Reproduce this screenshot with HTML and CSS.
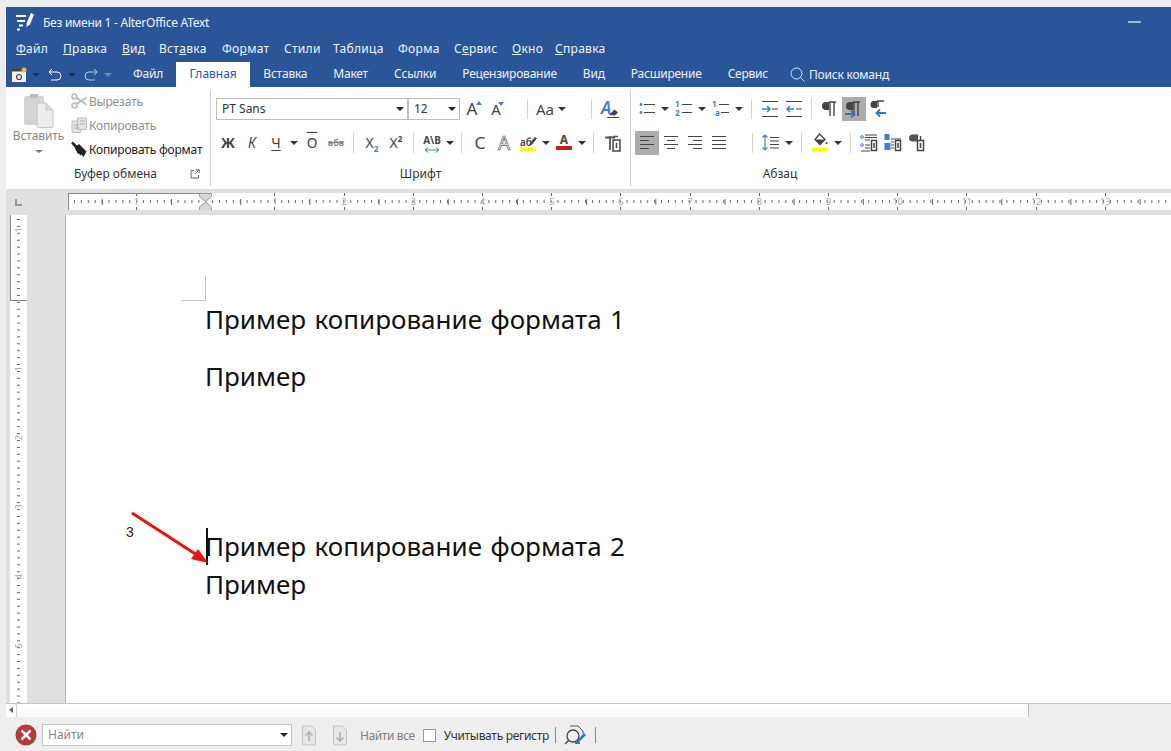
FILE: index.html
```html
<!doctype html>
<html lang="ru">

<head>
    <meta charset="UTF-8">
    <title>Без имени 1 - AlterOffice AText</title>
    <link rel="stylesheet" href="styles.css">
</head>

<body>
    <svg class="defs" width="0" height="0">
        <symbol id="i-caret" viewBox="0 0 12 24"><path d="M2 10h8l-4 4z" fill="#333"/></symbol>
        <symbol id="i-bullets" viewBox="0 0 24 24"><g fill="#3f7fd6"><circle cx="6" cy="7.500" r="1.400"/><circle cx="6" cy="15.500" r="1.400"/></g><path d="M9 7.500h11M9 15.500h11" stroke="#444" stroke-width="1.200"/></symbol>
        <symbol id="i-ind-in" viewBox="0 0 24 24"><path d="M4 4.500h16M14 12h6M4 19.500h16" stroke="#444" stroke-width="1.200"/><path d="M4 12h7M9 9l3 3-3 3" fill="none" stroke="#3f7fd6" stroke-width="1.500"/></symbol>
        <symbol id="i-ind-out" viewBox="0 0 24 24"><path d="M4 4.500h16M14 12h6M4 19.500h16" stroke="#444" stroke-width="1.200"/><path d="M12 12H5M8 9l-3 3 3 3" fill="none" stroke="#3f7fd6" stroke-width="1.500"/></symbol>
        <symbol id="i-pil" viewBox="0 0 24 24"><path d="M11 5H8a3.500 3.500 0 0 0 0 8h3z" fill="#444"/><path d="M11 5h7M12 5v14M16 5v14" stroke="#444" stroke-width="1.400"/></symbol>
        <symbol id="i-pil-r" viewBox="0 0 24 24"><path d="M11 5H8a3.500 3.500 0 0 0 0 8h3z" fill="#444"/><path d="M11 5h7M12 5v14M16 5v14" stroke="#444" stroke-width="1.400"/><path d="M3 17h9M9 13.500l3.500 3.500L9 20.500" fill="none" stroke="#2f72d0" stroke-width="1.800"/></symbol>
        <symbol id="i-pil-l" viewBox="0 0 24 24"><path d="M11 4H8a3.500 3.500 0 0 0 0 7h3z" fill="#444"/><path d="M11 4h7M12 4v6" stroke="#444" stroke-width="1.400"/><path d="M20 16h-9M14 12.500L10.500 16l3.500 3.500" fill="none" stroke="#2f72d0" stroke-width="1.800"/></symbol>
        <symbol id="i-left" viewBox="0 0 24 24"><path d="M5 5.500h14M5 9.500h9M5 13.500h14M5 17.500h9" stroke="#444" stroke-width="1.200"/></symbol>
        <symbol id="i-center" viewBox="0 0 24 24"><path d="M5 5.500h14M8 9.500h8M5 13.500h14M8 17.500h8" stroke="#444" stroke-width="1.200"/></symbol>
        <symbol id="i-right" viewBox="0 0 24 24"><path d="M5 5.500h14M10 9.500h9M5 13.500h14M10 17.500h9" stroke="#444" stroke-width="1.200"/></symbol>
        <symbol id="i-just" viewBox="0 0 24 24"><path d="M5 5.500h14M5 9.500h14M5 13.500h14M5 17.500h14" stroke="#444" stroke-width="1.200"/></symbol>
        <symbol id="i-spacing" viewBox="0 0 24 24"><path d="M11 6.500h9M11 10h9M11 13.500h9M11 17h9" stroke="#444" stroke-width="1.200"/><path d="M6 4v15M3.500 6.500L6 4l2.500 2.500M3.500 16.500L6 19l2.500-2.500" fill="none" stroke="#3f7fd6" stroke-width="1.200"/></symbol>
        <symbol id="i-fill" viewBox="0 0 24 24"><path d="M11.500 3l5.500 5.500-5 5-5-5z" fill="none" stroke="#444" stroke-width="1.300"/><path d="M7 8.500h10l-5 5z" fill="#444"/><circle cx="18.500" cy="12" r="1" fill="#444"/><path d="M4 16.500h16v4H4z" fill="#ffff00"/></symbol>
        <symbol id="i-before" viewBox="0 0 24 24"><circle cx="5" cy="6" r="1.300" fill="none" stroke="#3f7fd6"/><circle cx="5" cy="14" r="1.300" fill="none" stroke="#3f7fd6"/><path d="M8 4h12M8 6.500h12M8 9h5M8 14h5M8 17h5M4 20h9" stroke="#444"/><rect x="14.500" y="9.500" width="5" height="10" fill="#fff" stroke="#444" stroke-width="1.500"/><path d="M17 12v5" stroke="#444" stroke-width="1.500"/></symbol>
        <symbol id="i-after" viewBox="0 0 24 24"><path d="M3.500 3h5v6h-5zM3.500 12h6v7h-6z" fill="#3f7fd6"/><path d="M10 8h10M10 11h3M10 14h3M10 17h3" stroke="#444"/><rect x="14.500" y="9.500" width="5" height="10" fill="#fff" stroke="#444" stroke-width="1.500"/><path d="M17 12v5" stroke="#444" stroke-width="1.500"/></symbol>
        <symbol id="i-para" viewBox="0 0 24 24"><path d="M13 3.500H7.500a3.500 3.500 0 0 0 0 7H13z" fill="#555"/><rect x="12.500" y="9.500" width="6" height="10" fill="#fff" stroke="#444" stroke-width="1.500"/><path d="M15.500 12v5M15.500 5v4" stroke="#444" stroke-width="1.500"/></symbol>
        <symbol id="i-box" viewBox="0 0 24 24"><path d="M5 6.500h10M10 5v14" stroke="#555" stroke-width="1.800"/><path d="M13 5.500h5" stroke="#555" stroke-width="1.500"/><rect x="13" y="9" width="7" height="11" fill="#fff" stroke="#444" stroke-width="1.500"/><path d="M16.500 12v5" stroke="#444" stroke-width="1.500"/></symbol>
        <symbol id="i-updoc" viewBox="0 0 18 24"><path d="M2.500 3h9l4 4v13.500a1.500 1.500 0 0 1-1.500 1.500H4a1.500 1.500 0 0 1-1.500-1.500z" fill="#e6e6e6" stroke="#c2c2c2"/><path d="M9 18V9M5.500 12.500L9 9l3.500 3.500" fill="none" stroke="#adadad" stroke-width="1.500"/></symbol>
        <symbol id="i-downdoc" viewBox="0 0 18 24"><path d="M2.500 3h9l4 4v13.500a1.500 1.500 0 0 1-1.500 1.500H4a1.500 1.500 0 0 1-1.500-1.500z" fill="#e6e6e6" stroke="#c2c2c2"/><path d="M9 9v9M5.500 14.500L9 18l3.500-3.500" fill="none" stroke="#adadad" stroke-width="1.500"/></symbol>
    </svg>

    <header class="titlebar">
        <div class="title-row">
            <svg class="logo" width="18" height="18" viewBox="0 0 18 18">
                <path d="M0 3h10M1 8h8M3 12.500h4M1 16.500h3" stroke="#fff" stroke-width="2" fill="none"/>
                <path d="M15 0l3 1.500-4 10-3.500 2.500.2-4z" fill="#fff"/>
            </svg>
            <span class="doc-title">Без имени 1 - AlterOffice AText</span>
            <span class="minimize"></span>
        </div>
        <nav class="menu-row">
            <span class="m1"><u>Ф</u>айл</span>
            <span class="m2"><u>П</u>равка</span>
            <span class="m3"><u>В</u>ид</span>
            <span class="m4">Вст<u>а</u>вка</span>
            <span class="m5">Фо<u>р</u>мат</span>
            <span class="m6">Стили</span>
            <span class="m7">Таблица</span>
            <span class="m8">Форма</span>
            <span class="m9">С<u>е</u>рвис</span>
            <span class="m10"><u>О</u>кно</span>
            <span class="m11"><u>С</u>правка</span>
        </nav>
        <div class="tab-row">
            <div class="quick">
                <svg width="16" height="16" viewBox="0 0 16 16">
                    <path d="M1 3h12l2 2v10H1z" fill="#f4f4f4"/>
                    <path d="M1 1.500h11v3H1z" fill="#444"/>
                    <circle cx="8" cy="10" r="2.500" fill="none" stroke="#444" stroke-width="1.200"/>
                    <circle cx="13" cy="3" r="2.500" fill="#f2b33d"/>
                </svg>
                <svg class="q-caret" width="12" height="24"><path d="M2 10h8l-4 4z" fill="#20324f"/></svg>
                <svg width="16" height="14" viewBox="0 0 16 14">
                    <path d="M5 1L2 4l3 3M2 4h8a3.500 3.500 0 0 1 0 8H4" fill="none" stroke="#fff"/>
                </svg>
                <svg class="q-caret" width="12" height="24"><path d="M2 10h8l-4 4z" fill="#20324f"/></svg>
                <svg width="16" height="14" viewBox="0 0 16 14">
                    <path d="M11 1l3 3-3 3M14 4H6a3.500 3.500 0 0 0 0 8h6" fill="none" stroke="#b9c8df"/>
                </svg>
                <svg class="q-caret" width="12" height="24"><path d="M2 10h8l-4 4z" fill="#7187ab"/></svg>
            </div>
            <span class="tab">Файл</span>
            <span class="tab active">Главная</span>
            <span class="tab">Вставка</span>
            <span class="tab">Макет</span>
            <span class="tab">Ссылки</span>
            <span class="tab">Рецензирование</span>
            <span class="tab">Вид</span>
            <span class="tab">Расширение</span>
            <span class="tab">Сервис</span>
            <span class="tell">
                <svg width="15" height="15" viewBox="0 0 15 15"><circle cx="6.500" cy="6.500" r="5.500" fill="none" stroke="#dfe6f1"/><path d="M10.500 10.500l4 4" stroke="#dfe6f1"/></svg>
                Поиск команд
            </span>
        </div>
    </header>

    <section class="ribbon">
        <div class="group clip">
            <div class="clip-body">
                <div class="paste">
                    <svg width="32" height="34" viewBox="0 0 32 34">
                        <rect x="1" y="2" width="20" height="29" rx="2" fill="#d4d4d4"/>
                        <rect x="7" y="0" width="8" height="4" fill="#bdbdbd"/>
                        <path d="M14 9h9l7 7v16a1.500 1.500 0 0 1-1.500 1.500h-13A1.500 1.500 0 0 1 14 32z" fill="#ececec" stroke="#c4c4c4"/>
                        <path d="M23 9v7h7" fill="#dadada" stroke="#c4c4c4"/>
                    </svg>
                    <span class="paste-label">Вставить</span>
                    <svg width="12" height="12" viewBox="0 2 12 12"><path d="M2 7h8l-4 3z" fill="#777"/></svg>
                </div>
                <div class="clip-list">
                    <div class="clip-item off">
                        <svg width="16" height="16" viewBox="0 0 16 16">
                            <circle cx="3.500" cy="3.500" r="2.500" fill="none" stroke="#bbb" stroke-width="1.500"/>
                            <circle cx="3.500" cy="12.500" r="2.500" fill="none" stroke="#bbb" stroke-width="1.500"/>
                            <path d="M5.500 5l10 6.500M5.500 11l10-6.500" stroke="#bbb" stroke-width="1.800"/>
                        </svg>
                        Вырезать
                    </div>
                    <div class="clip-item off">
                        <svg width="16" height="16" viewBox="0 0 16 16">
                            <rect x="1" y="4" width="9" height="11.500" rx="1" fill="#e4e4e4" stroke="#bbb"/>
                            <rect x="6.500" y="1" width="9" height="11.500" rx="1" fill="#e4e4e4" stroke="#bbb"/>
                            <path d="M3 8h5M3 11h5M9 4h5M9 7h5" stroke="#aaa"/>
                        </svg>
                        Копировать
                    </div>
                    <div class="clip-item">
                        <svg width="16" height="16" viewBox="0 0 16 16">
                            <path d="M1 1.500l5 5" stroke="#222" stroke-width="2.500"/>
                            <path d="M3.500 6.500L8 3l7.500 7.500-3 5.500-2-2.500-1 1-1.500-2-1 .5z" fill="#222"/>
                        </svg>
                        Копировать формат
                    </div>
                </div>
            </div>
            <div class="group-label clip-label">
                <span>Буфер обмена</span>
                <svg width="10" height="10" viewBox="0 0 10 10"><path d="M4 1.500H1V9h7.500V6M5 5l4-4M6 .8h3.200V4" fill="none" stroke="#666"/></svg>
            </div>
        </div>

        <div class="group font">
            <div class="row">
                <div class="select font-name">PT Sans<i class="sel-caret"></i></div>
                <div class="select font-size">12<i class="sel-caret"></i></div>
                <span class="ic txt grow">A<b></b></span>
                <span class="ic txt shrink">A<b></b></span>
                <i class="sep far19"></i>
                <span class="ic-aa">Aa</span>
                <svg class="caret"><use href="#i-caret"/></svg>
                <i class="sep far23"></i>
                <svg class="ic" viewBox="0 0 24 24">
                    <text x="3" y="17" class="bluea">A</text>
                    <path d="M11 18l5.500-5.500 3.500 3-3 3z" fill="#444"/>
                    <path d="M9 20.500h12" stroke="#444"/>
                </svg>
            </div>
            <div class="row">
                <span class="ic txt bold">Ж</span>
                <span class="ic txt ital">К</span>
                <span class="ic txt under">Ч</span>
                <svg class="caret"><use href="#i-caret"/></svg>
                <span class="ic txt over">О</span>
                <span class="ic txt strike">абв</span>
                <i class="sep"></i>
                <span class="ic txt">X<sub>2</sub></span>
                <span class="ic txt">X<sup>2</sup></span>
                <i class="sep"></i>
                <span class="ic txt track">A\B
                    <svg width="16" height="6" viewBox="0 0 16 6"><path d="M1 3h14M4 .5L1 3l3 2.500M12 .5L15 3l-3 2.500" fill="none" stroke="#3f7fd6"/></svg>
                </span>
                <svg class="caret"><use href="#i-caret"/></svg>
                <i class="sep"></i>
                <span class="ic txt big">С</span>
                <span class="ic txt hollow">A</span>
                <svg class="ic" viewBox="0 0 24 24">
                    <text x="4" y="15" class="hl">аб</text>
                    <path d="M14 12l5-6 2 1.500-5 6-3 1z" fill="#444"/>
                    <path d="M4 16.500h16v4H4z" fill="#ffff00"/>
                </svg>
                <svg class="caret"><use href="#i-caret"/></svg>
                <span class="ic txt swatch red"><span class="swatch-letter bold">A</span></span>
                <svg class="caret"><use href="#i-caret"/></svg>
                <i class="sep"></i>
                <svg class="ic"><use href="#i-box"/></svg>
            </div>
            <div class="group-label">Шрифт</div>
        </div>

        <div class="group para">
            <div class="row">
                <svg class="ic"><use href="#i-bullets"/></svg>
                <svg class="caret"><use href="#i-caret"/></svg>
                <svg class="ic" viewBox="0 0 24 24">
                    <text x="3" y="10" class="mini">1</text>
                    <text x="3" y="19" class="mini">2</text>
                    <path d="M10 7.500h10M10 15.500h10" stroke="#444" stroke-width="1.200"/>
                </svg>
                <svg class="caret"><use href="#i-caret"/></svg>
                <svg class="ic" viewBox="0 0 24 24">
                    <text x="3" y="10" class="mini">1</text>
                    <text x="6" y="19" class="mini">a</text>
                    <path d="M10 7.500h10M12 15.500h8" stroke="#444" stroke-width="1.200"/>
                </svg>
                <svg class="caret"><use href="#i-caret"/></svg>
                <i class="sep"></i>
                <svg class="ic"><use href="#i-ind-in"/></svg>
                <svg class="ic"><use href="#i-ind-out"/></svg>
                <i class="sep"></i>
                <svg class="ic"><use href="#i-pil"/></svg>
                <svg class="ic on"><use href="#i-pil-r"/></svg>
                <svg class="ic"><use href="#i-pil-l"/></svg>
            </div>
            <div class="row">
                <svg class="ic on"><use href="#i-left"/></svg>
                <svg class="ic"><use href="#i-center"/></svg>
                <svg class="ic"><use href="#i-right"/></svg>
                <svg class="ic"><use href="#i-just"/></svg>
                <i class="sep far21"></i>
                <svg class="ic"><use href="#i-spacing"/></svg>
                <svg class="caret"><use href="#i-caret"/></svg>
                <i class="sep"></i>
                <svg class="ic"><use href="#i-fill"/></svg>
                <svg class="caret"><use href="#i-caret"/></svg>
                <i class="sep"></i>
                <svg class="ic"><use href="#i-before"/></svg>
                <svg class="ic"><use href="#i-after"/></svg>
                <svg class="ic"><use href="#i-para"/></svg>
            </div>
            <div class="group-label">Абзац</div>
        </div>
    </section>

    <div class="ruler-band">
        <div class="corner"></div>
        <div class="ruler">
            <span class="r-lead"></span>
            <span class="r-seg">1</span>
            <span class="r-seg"></span>
            <span class="r-seg">1</span>
            <span class="r-seg">2</span>
            <span class="r-seg">3</span>
            <span class="r-seg">4</span>
            <span class="r-seg">5</span>
            <span class="r-seg">6</span>
            <span class="r-seg">7</span>
            <span class="r-seg">8</span>
            <span class="r-seg">9</span>
            <span class="r-seg">10</span>
            <span class="r-seg">11</span>
            <span class="r-seg">12</span>
            <span class="r-seg">13</span>
            <svg class="hourglass" width="13" height="18" viewBox="0 0 13 18"><path d="M.5 .5h12v3l-6 5-6-5zM.5 17.500h12V14l-6-5-6 5z" fill="#d8d8d8" stroke="#9a9a9a"/></svg>
        </div>
    </div>

    <main class="workspace">
        <aside class="side">
            <div class="vruler">
                <span class="v-first">1</span>
                <span class="v-blank"></span>
                <span class="v-seg">1</span>
                <span class="v-seg">2</span>
                <span class="v-seg">3</span>
                <span class="v-seg">4</span>
                <span class="v-seg">5</span>
            </div>
        </aside>
        <div class="page">
            <div class="crop"></div>
            <p class="line l1">Пример копирование формата 1</p>
            <p class="line l2">Пример</p>
            <p class="line l3">Пример копирование формата 2</p>
            <p class="line l4">Пример</p>
            <i class="cursor"></i>
            <span class="note">3</span>
            <svg class="arrow" width="90" height="60" viewBox="0 0 90 60">
                <path d="M2 2l68 44" stroke="#f01010" stroke-width="3"/>
                <path d="M78 52l-17-4 7-10z" fill="#f01010"/>
            </svg>
        </div>
    </main>

    <div class="hscroll">
        <span class="hs-btn"><i></i></span>
        <span class="hs-thumb"></span>
        <span class="hs-track"></span>
    </div>

    <footer class="findbar">
        <svg class="close" width="22" height="22" viewBox="0 0 22 22">
            <circle cx="11" cy="11" r="10.500" fill="#b33a3a"/>
            <path d="M6.500 6.500l9 9M15.500 6.500l-9 9" stroke="#fff" stroke-width="2.500"/>
        </svg>
        <div class="find-input">Найти<i class="sel-caret"></i></div>
        <svg class="doc-btn first" width="18" height="24"><use href="#i-updoc"/></svg>
        <svg class="doc-btn" width="18" height="24"><use href="#i-downdoc"/></svg>
        <span class="find-all">Найти все</span>
        <span class="check"></span>
        <span class="match">Учитывать регистр</span>
        <i class="bar-sep"></i>
        <svg class="replace" width="24" height="24" viewBox="0 0 24 24">
            <path d="M7 3h8l5 5v3" fill="none" stroke="#555"/>
            <circle cx="10" cy="13" r="6" fill="none" stroke="#444" stroke-width="1.300"/>
            <path d="M5.500 17.500L2 21M12 20h5" stroke="#444" stroke-width="1.300"/>
            <path d="M13 19l8-9 2 2-8 8-3 1z" fill="#2f72d0"/>
        </svg>
        <i class="bar-sep bar-end"></i>
    </footer>
</body>

</html>
```
FILE: styles.css
```css
* {
    box-sizing: border-box;
}

html,
body {
    height: 100%;
}

body {
    margin: 0;
    padding: 7px 0 0 6px;
    display: flex;
    flex-direction: column;
    overflow: hidden;
    background-color: #eeeeee;
    font-family: "Noto Sans", "Open Sans", sans-serif;
    font-size: 12px;
    color: #333333;
}

.defs {
    position: absolute;
}

.mini {
    font-family: "Noto Sans", sans-serif;
    font-size: 8px;
    font-weight: 700;
    fill: #3f7fd6;
}

.bluea {
    font-family: "Noto Sans", sans-serif;
    font-size: 17px;
    font-style: italic;
    font-weight: 600;
    fill: #3f7fd6;
}

.hl {
    font-family: "Noto Sans", sans-serif;
    font-size: 10px;
    font-weight: 600;
    fill: #444444;
}

/* title bar */
.titlebar {
    height: 80px;
    flex: none;
    background-color: #2a5699;
    color: #ffffff;
}

.title-row {
    height: 29px;
    display: flex;
    align-items: center;
    padding-left: 10px;
}

.logo {
    flex: none;
}

.doc-title {
    margin: 2px 0 0 9px;
    letter-spacing: -.26px;
    color: #f0f3f8;
}

.minimize {
    width: 13px;
    height: 2px;
    margin: 1px 30px 0 auto;
    background-color: #a3b8d6;
}

.menu-row {
    height: 24px;
    display: flex;
    align-items: center;
    letter-spacing: .3px;
    color: #f0f3f8;
}

.menu-row span {
    flex: none;
}

.menu-row .m1 { margin-left: 10px; width: 47px; }
.menu-row .m2 { width: 59px; }
.menu-row .m3 { width: 37px; }
.menu-row .m4 { width: 63px; }
.menu-row .m5 { width: 62px; }
.menu-row .m6 { width: 49px; }
.menu-row .m7 { width: 65px; }
.menu-row .m8 { width: 56px; }
.menu-row .m9 { width: 58px; }
.menu-row .m10 { width: 43px; }

.tab-row {
    height: 27px;
    display: flex;
    align-items: flex-end;
}

.quick {
    width: 114px;
    height: 25px;
    flex: none;
    display: flex;
    align-items: center;
    padding-left: 5px;
}

.q-caret {
    margin: 0 5px 0 3px;
}

.tab {
    height: 25px;
    padding: 0 13px;
    line-height: 24px;
    letter-spacing: -.22px;
    color: #eef1f7;
}

.tab.active {
    padding: 0 13.5px;
    letter-spacing: 0;
    background-color: #ffffff;
    color: #2a5699;
}

.tell {
    display: flex;
    align-items: center;
    gap: 4px;
    height: 25px;
    margin-left: 9px;
    letter-spacing: -.22px;
    color: #eef1f7;
}

/* ribbon */
.ribbon {
    height: 102px;
    flex: none;
    display: flex;
    background-color: #ffffff;
}

.group {
    position: relative;
    padding-top: 11px;
}

.group-label {
    position: absolute;
    left: 0;
    right: 0;
    top: 76px;
    text-align: center;
    line-height: 16px;
}

.clip {
    width: 205px;
    border-right: 1px solid #cfcfcf;
    margin: 3px 0 3px;
    padding-top: 1px;
}

.clip-body {
    display: flex;
}

.paste {
    width: 65px;
    padding-top: 3px;
    flex: none;
    display: flex;
    flex-direction: column;
    align-items: center;
    letter-spacing: -.1px;
    color: #888888;
}

.paste-label {
    margin-top: -1px;
    line-height: 18px;
}

.clip-list {
    margin-top: -2px;
    display: flex;
    flex-direction: column;
}

.clip-item {
    height: 24px;
    display: flex;
    align-items: center;
    gap: 2px;
    white-space: nowrap;
    letter-spacing: -.2px;
    color: #222222;
}

.clip-item.off {
    color: #8f8f8f;
}

.clip-label {
    top: 76px;
    left: 68px;
    right: 10px;
    display: flex;
    justify-content: space-between;
    align-items: center;
}

.font {
    width: 420px;
    padding-left: 5px;
    border-right: 1px solid #cfcfcf;
    margin: 3px 0;
    padding-top: 8px;
}

.para {
    width: 298px;
    padding-left: 4px;
    margin: 3px 0;
    padding-top: 8px;
}

.row {
    height: 22px;
    margin-bottom: 12px;
    display: flex;
    align-items: center;
}

.ic {
    width: 24px;
    height: 24px;
    flex: none;
}

.ic.on {
    background-color: #acacac;
}

.caret {
    width: 12px;
    height: 24px;
    flex: none;
}

.para .caret {
    margin-right: 1px;
}

.sep {
    width: 1px;
    height: 20px;
    margin: 0 6px 0 5px;
    flex: none;
    background-color: #d2d2d2;
}

.sep.far19 { margin-left: 19px; }
.sep.far21 { margin-left: 21px; }
.sep.far23 { margin-left: 23px; }

.select {
    height: 22px;
    flex: none;
    position: relative;
    border: 1px solid #bdbdbd;
    padding-left: 5px;
    line-height: 20px;
}

.font-name {
    width: 192px;
}

.font-size {
    width: 52px;
}

.sel-caret {
    position: absolute;
    right: 3px;
    top: 8px;
    border: 4px solid transparent;
    border-top: 4px solid #222222;
    border-bottom: 0;
}

.txt {
    position: relative;
    display: block;
    text-align: center;
    line-height: 24px;
    font-size: 14px;
    color: #444444;
}

.txt sub,
.txt sup {
    font-size: 8px;
    font-weight: 700;
    color: #3f7fd6;
    line-height: 0;
}

.txt sup {
    color: #444444;
}

.grow {
    font-size: 17px;
}

.shrink {
    font-size: 15px;
}

.grow b,
.shrink b {
    position: absolute;
    top: 4px;
    right: 2px;
    border: 3px solid transparent;
    border-bottom: 4px solid #3f7fd6;
    border-top: 0;
}

.shrink b {
    border-bottom: 0;
    border-top: 4px solid #3f7fd6;
    top: 5px;
    right: 4px;
}

.ic-aa {
    width: 22px;
    flex: none;
    text-align: center;
    font-size: 15px;
    color: #444444;
}

.bold {
    font-weight: 700;
}

.ital {
    font-style: italic;
}

.under {
    text-decoration: underline;
    text-underline-offset: 2px;
}

.over {
    text-decoration: overline;
}

.strike {
    font-size: 9px;
    font-weight: 700;
    color: #888888;
    text-decoration: line-through;
}

.track {
    font-size: 10px;
    font-weight: 700;
    line-height: 13px;
    padding-top: 3px;
}

.track svg {
    display: block;
    margin: 0 auto;
}

.big {
    font-size: 17px;
}

.hollow {
    font-size: 19px;
    color: #ffffff;
    -webkit-text-stroke: .7px #555555;
}

.swatch {
    font-size: 11px;
    line-height: 14px;
}

.swatch::after {
    content: "";
    display: block;
    width: 16px;
    height: 4px;
    margin: 0 auto;
}

.swatch-letter {
    display: block;
    height: 15px;
    padding-top: 2px;
}

.red::after {
    background-color: #c81e1e;
}

.red .swatch-letter {
    font-size: 12px;
    line-height: 13px;
}

/* rulers */
.ruler-band {
    height: 26px;
    flex: none;
    display: flex;
    background-color: #e0e0e0;
}

.corner {
    width: 7px;
    height: 7px;
    margin: 10px 0 0 9px;
    border-left: 2px solid #999999;
    border-bottom: 2px solid #999999;
}

.ruler {
    position: relative;
    width: 1103px;
    height: 17px;
    margin: 4px 0 0 46px;
    display: flex;
    overflow: hidden;
    background-color: #ffffff;
    background-image:
        linear-gradient(90deg, #666666 1px, transparent 1px),
        linear-gradient(90deg, #666666 1px, transparent 1px);
    background-size: 6.92px 3px, 69.2px 6px;
    background-position: 6px 7px, 33.8px 6px;
    background-repeat: repeat-x;
}

.ruler::before {
    content: "";
    position: absolute;
    left: 0;
    top: 0;
    width: 138px;
    height: 17px;
    border: 1px solid #888888;
    border-right: 0;
}

.r-lead {
    width: 34px;
    flex: none;
}

.r-seg {
    width: 69.2px;
    flex: none;
    text-align: center;
    font-size: 9px;
    line-height: 17px;
    color: #a6a6a6;
    background: linear-gradient(#666666, #666666) center top / 1px 3px no-repeat,
        linear-gradient(#666666, #666666) center bottom / 1px 3px no-repeat;
}

.hourglass {
    position: absolute;
    left: 131px;
    top: 0;
}

.workspace {
    flex: 1;
    min-height: 0;
    display: flex;
}

.side {
    width: 59px;
    flex: none;
    padding-left: 4px;
    background-color: #e0e0e0;
}

.vruler {
    position: relative;
    width: 17px;
    height: 100%;
    display: flex;
    flex-direction: column;
    overflow: hidden;
    background-color: #ffffff;
    background-image: linear-gradient(#666666 1px, transparent 1px);
    background-size: 3px 6.92px;
    background-position: 7px 4px;
    background-repeat: repeat-y;
}

.vruler::before {
    content: "";
    position: absolute;
    left: 0;
    top: -1px;
    width: 17px;
    height: 86px;
    border: 1px solid #888888;
    border-top: 0;
}

.vruler span {
    flex: none;
    display: flex;
    align-items: center;
    justify-content: center;
    font-size: 9px;
    color: #a6a6a6;
}

.vruler span:not(:empty) {
    writing-mode: vertical-rl;
    transform: rotate(180deg);
}

.v-first {
    height: 30.6px;
}

.v-blank {
    height: 88.5px;
}

.v-seg {
    height: 69.2px;
}

.page {
    position: relative;
    flex: 1;
    overflow: hidden;
    padding-left: 139px;
    border-left: 1px solid #b4b4b4;
    background-color: #ffffff;
    font-family: "Noto Sans", sans-serif;
    font-size: 26px;
    word-spacing: 1.7px;
    color: #111111;
}

.crop {
    width: 25px;
    height: 25px;
    margin: 61px 0 0 -24px;
    border-right: 1px solid #c4c4c4;
    border-bottom: 1px solid #c4c4c4;
}

.line {
    margin: 0;
    line-height: 38px;
    white-space: nowrap;
}

.l1 {
    margin-top: -1px;
}

.l2 {
    margin-top: 19px;
}

.l3 {
    margin-top: 132px;
}

.cursor {
    position: absolute;
    left: 140px;
    top: 313px;
    width: 2px;
    height: 37px;
    background-color: #111111;
}

.note {
    position: absolute;
    left: 60px;
    top: 308px;
    font-family: "Liberation Sans", sans-serif;
    font-size: 14px;
    line-height: 18px;
    color: #4a1010;
}

.arrow {
    position: absolute;
    left: 64px;
    top: 296px;
}

/* bottom */
.hscroll {
    height: 14px;
    flex: none;
    display: flex;
    border-top: 1px solid #c4c4c4;
    background-color: #ffffff;
}

.hs-btn {
    width: 11px;
    flex: none;
    position: relative;
    border-right: 1px solid #d0d0d0;
}

.hs-btn i {
    position: absolute;
    left: 3px;
    top: 3px;
    border: 3.5px solid transparent;
    border-right: 4px solid #666666;
    border-left: 0;
}

.hs-thumb {
    width: 1012px;
    flex: none;
    border-right: 1px solid #bdbdbd;
    background: linear-gradient(#ffffff, #fafafa);
}

.hs-track {
    flex: 1;
    background-color: #eeeeee;
}

.findbar {
    height: 34px;
    flex: none;
    display: flex;
    align-items: center;
    padding: 2px 0 0 9px;
    color: #333333;
}

.close {
    flex: none;
}

.find-input {
    position: relative;
    width: 250px;
    height: 22px;
    margin-left: 5px;
    padding-left: 5px;
    line-height: 20px;
    border: 1px solid #c4c4c4;
    background-color: #ffffff;
    color: #888888;
}

.doc-btn {
    flex: none;
    margin-left: 13px;
}

.doc-btn.first {
    margin-left: 8px;
}

.find-all {
    margin-left: 11px;
    letter-spacing: -.4px;
    color: #808080;
}

.check {
    width: 13px;
    height: 13px;
    margin-left: 8px;
    border: 1px solid #999999;
    background-color: #ffffff;
}

.match {
    margin-left: 8px;
    white-space: nowrap;
    letter-spacing: -.3px;
}

.bar-sep {
    width: 1px;
    height: 16px;
    margin-left: 6px;
    background-color: #888888;
}

.bar-end {
    margin-left: 8px;
}

.replace {
    margin-left: 7px;
    flex: none;
}
```
